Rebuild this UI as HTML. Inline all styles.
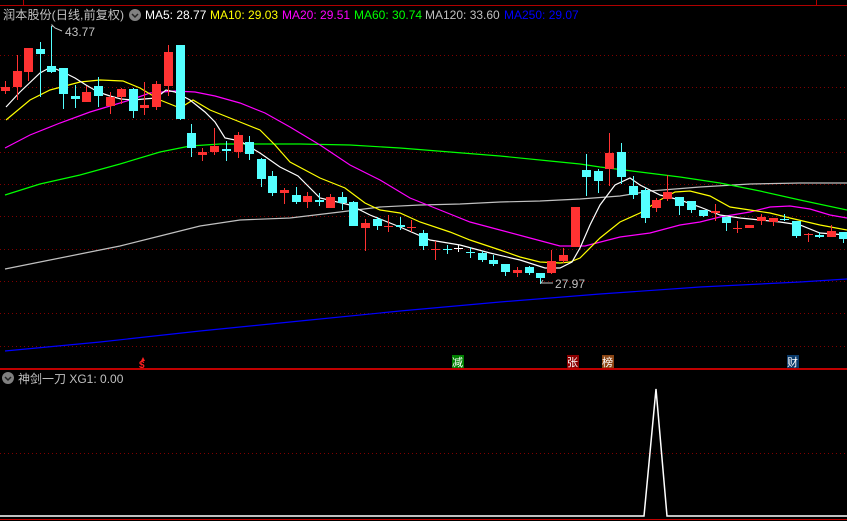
<!DOCTYPE html>
<html><head><meta charset="utf-8"><style>
html,body{margin:0;padding:0;background:#000;width:847px;height:521px;overflow:hidden}
svg{display:block}
text{font-family:"Liberation Sans","Noto Sans CJK SC",sans-serif}
</style></head><body>
<svg width="847" height="521" viewBox="0 0 847 521" xmlns="http://www.w3.org/2000/svg">
<rect width="847" height="521" fill="#000"/>
<line x1="0" y1="5.5" x2="847" y2="5.5" stroke="#b00000" stroke-width="1"/>
<line x1="23.5" y1="0" x2="23.5" y2="5" stroke="#b00000"/>
<line x1="816.5" y1="0" x2="816.5" y2="5" stroke="#b00000"/>
<g stroke="#800000" stroke-width="1" stroke-dasharray="1,3">
<line x1="0" y1="55.5" x2="847" y2="55.5"/>
<line x1="0" y1="87.5" x2="847" y2="87.5"/>
<line x1="0" y1="119.5" x2="847" y2="119.5"/>
<line x1="0" y1="152.5" x2="847" y2="152.5"/>
<line x1="0" y1="184.5" x2="847" y2="184.5"/>
<line x1="0" y1="216.5" x2="847" y2="216.5"/>
<line x1="0" y1="249.5" x2="847" y2="249.5"/>
<line x1="0" y1="281.5" x2="847" y2="281.5"/>
<line x1="0" y1="313.5" x2="847" y2="313.5"/>
<line x1="0" y1="346.5" x2="847" y2="346.5"/>
<line x1="0" y1="453.5" x2="847" y2="453.5"/>
</g>
<g fill="none" stroke-width="1.2">
<polyline stroke="#0000ff" points="5,351 100,342 200,331 300,321 400,311 500,302 600,294 700,287 800,282 847,279"/>
<polyline stroke="#c0c0c0" points="5,269 40,262 80,254 120,246 160,236 200,226 240,220 290,218 340,212 380,207 420,205 460,204 500,202 540,201 580,199 620,196 650,191 700,187 750,184 800,183 847,183"/>
<polyline stroke="#00ff00" points="5,195 40,184 80,175 120,164 160,152 190,146 220,144 260,144 300,144 350,145 400,148 450,152 500,156 550,161 580,164 600,167 640,172 680,177 720,183 760,191 800,200 847,210"/>
<polyline stroke="#ff00ff" points="5,148 30,135 60,123 90,112 110,106 130,100 150,93 175,91 195,92 215,96 240,103 265,113 290,127 320,145 350,165 380,180 410,198 440,210 470,222 500,230 530,238 560,246 585,246 620,237 650,233 680,225 700,222 720,217 750,212 770,207 790,206 810,209 830,215 847,218"/>
<polyline stroke="#ffff00" points="6,120 30,100 50,90 80,82 100,80 123,81 140,88 160,100 180,108 193,100 210,110 240,122 260,130 275,145 290,162 320,178 345,188 365,203 380,210 400,213 420,222 450,232 470,240 500,250 520,257 540,262 560,263 570,262 580,258 600,238 620,222 640,213 660,200 675,192 690,191 710,196 730,207 750,210 770,213 790,218 820,225 847,230"/>
<polyline stroke="#ffffff" points="6,107 20,92 40,73 51,67 63,72 75,78 86,85 98,92 110,96 121,99 133,100 144,99 156,98 166,90 175,92 190,100 205,112 215,122 225,138 240,141 260,153 280,167 298,176 320,198 350,205 370,215 400,227 430,240 460,245 490,253 520,260 545,268 560,268 572,262 580,248 590,225 600,205 615,185 630,178 640,185 660,195 680,200 700,207 720,215 740,218 760,220 780,222 800,225 820,233 847,235"/>
</g>
<g stroke-width="1" shape-rendering="crispEdges">
<line x1="5.5" y1="81" x2="5.5" y2="94" stroke="#ff3232"/><rect x="1" y="87" width="9" height="4" fill="#ff3232"/>
<line x1="17.5" y1="55" x2="17.5" y2="100" stroke="#ff3232"/><rect x="13" y="71" width="9" height="16" fill="#ff3232"/>
<line x1="28.5" y1="48" x2="28.5" y2="81" stroke="#ff3232"/><rect x="24" y="48" width="9" height="24" fill="#ff3232"/>
<line x1="40.5" y1="42" x2="40.5" y2="97" stroke="#54ffff"/><rect x="36" y="49" width="9" height="5" fill="#54ffff"/>
<line x1="51.5" y1="26" x2="51.5" y2="73" stroke="#54ffff"/><rect x="47" y="66" width="9" height="6" fill="#54ffff"/>
<line x1="63.5" y1="68" x2="63.5" y2="109" stroke="#54ffff"/><rect x="59" y="68" width="9" height="26" fill="#54ffff"/>
<line x1="75.5" y1="85" x2="75.5" y2="108" stroke="#54ffff"/><rect x="71" y="96" width="9" height="3" fill="#54ffff"/>
<line x1="86.5" y1="86" x2="86.5" y2="102" stroke="#ff3232"/><rect x="82" y="92" width="9" height="10" fill="#ff3232"/>
<line x1="98.5" y1="77" x2="98.5" y2="107" stroke="#54ffff"/><rect x="94" y="86" width="9" height="10" fill="#54ffff"/>
<line x1="110.5" y1="92" x2="110.5" y2="114" stroke="#ff3232"/><rect x="106" y="97" width="9" height="9" fill="#ff3232"/>
<line x1="121.5" y1="88" x2="121.5" y2="104" stroke="#ff3232"/><rect x="117" y="89" width="9" height="8" fill="#ff3232"/>
<line x1="133.5" y1="88" x2="133.5" y2="118" stroke="#54ffff"/><rect x="129" y="89" width="9" height="22" fill="#54ffff"/>
<line x1="144.5" y1="82" x2="144.5" y2="115" stroke="#ff3232"/><rect x="140" y="105" width="9" height="3" fill="#ff3232"/>
<line x1="156.5" y1="81" x2="156.5" y2="110" stroke="#ff3232"/><rect x="152" y="84" width="9" height="23" fill="#ff3232"/>
<line x1="168.5" y1="45" x2="168.5" y2="96" stroke="#ff3232"/><rect x="164" y="52" width="9" height="34" fill="#ff3232"/>
<line x1="180.5" y1="45" x2="180.5" y2="120" stroke="#54ffff"/><rect x="176" y="45" width="9" height="74" fill="#54ffff"/>
<line x1="191.5" y1="124" x2="191.5" y2="157" stroke="#54ffff"/><rect x="187" y="133" width="9" height="15" fill="#54ffff"/>
<line x1="202.5" y1="148" x2="202.5" y2="161" stroke="#ff3232"/><rect x="198" y="152" width="9" height="3" fill="#ff3232"/>
<line x1="214.5" y1="128" x2="214.5" y2="155" stroke="#ff3232"/><rect x="210" y="146" width="9" height="6" fill="#ff3232"/>
<line x1="226.5" y1="141" x2="226.5" y2="161" stroke="#54ffff"/><rect x="222" y="149" width="9" height="2" fill="#54ffff"/>
<line x1="238.5" y1="132" x2="238.5" y2="158" stroke="#ff3232"/><rect x="234" y="135" width="9" height="17" fill="#ff3232"/>
<line x1="249.5" y1="136" x2="249.5" y2="160" stroke="#54ffff"/><rect x="245" y="142" width="9" height="12" fill="#54ffff"/>
<line x1="261.5" y1="158" x2="261.5" y2="187" stroke="#54ffff"/><rect x="257" y="159" width="9" height="20" fill="#54ffff"/>
<line x1="272.5" y1="171" x2="272.5" y2="196" stroke="#54ffff"/><rect x="268" y="176" width="9" height="17" fill="#54ffff"/>
<line x1="284.5" y1="188" x2="284.5" y2="204" stroke="#ff3232"/><rect x="280" y="190" width="9" height="3" fill="#ff3232"/>
<line x1="296.5" y1="187" x2="296.5" y2="204" stroke="#54ffff"/><rect x="292" y="195" width="9" height="7" fill="#54ffff"/>
<line x1="307.5" y1="192" x2="307.5" y2="208" stroke="#ff3232"/><rect x="303" y="196" width="9" height="6" fill="#ff3232"/>
<line x1="319.5" y1="193" x2="319.5" y2="206" stroke="#54ffff"/><rect x="315" y="200" width="9" height="2" fill="#54ffff"/>
<line x1="330.5" y1="194" x2="330.5" y2="208" stroke="#ff3232"/><rect x="326" y="197" width="9" height="11" fill="#ff3232"/>
<line x1="342.5" y1="192" x2="342.5" y2="210" stroke="#54ffff"/><rect x="338" y="197" width="9" height="6" fill="#54ffff"/>
<line x1="353.5" y1="201" x2="353.5" y2="226" stroke="#54ffff"/><rect x="349" y="202" width="9" height="24" fill="#54ffff"/>
<line x1="365.5" y1="219" x2="365.5" y2="251" stroke="#ff3232"/><rect x="361" y="223" width="9" height="5" fill="#ff3232"/>
<line x1="377.5" y1="217" x2="377.5" y2="230" stroke="#54ffff"/><rect x="373" y="219" width="9" height="7" fill="#54ffff"/>
<line x1="388.5" y1="215" x2="388.5" y2="232" stroke="#ff3232"/><rect x="384" y="226" width="9" height="1" fill="#ff3232"/>
<line x1="400.5" y1="217" x2="400.5" y2="230" stroke="#54ffff"/><rect x="396" y="225" width="9" height="2" fill="#54ffff"/>
<line x1="411.5" y1="220" x2="411.5" y2="232" stroke="#ff3232"/><rect x="407" y="227" width="9" height="1" fill="#ff3232"/>
<line x1="423.5" y1="230" x2="423.5" y2="250" stroke="#54ffff"/><rect x="419" y="233" width="9" height="13" fill="#54ffff"/>
<line x1="435.5" y1="241" x2="435.5" y2="260" stroke="#ff3232"/><rect x="431" y="249" width="9" height="1" fill="#ff3232"/>
<line x1="447.5" y1="245" x2="447.5" y2="254" stroke="#54ffff"/><rect x="443" y="249" width="9" height="1" fill="#54ffff"/>
<line x1="458.5" y1="245" x2="458.5" y2="252" stroke="#fff"/><rect x="454" y="248" width="9" height="1" fill="#fff"/>
<line x1="470.5" y1="247" x2="470.5" y2="258" stroke="#54ffff"/><rect x="466" y="252" width="9" height="1" fill="#54ffff"/>
<line x1="482.5" y1="251" x2="482.5" y2="262" stroke="#54ffff"/><rect x="478" y="253" width="9" height="7" fill="#54ffff"/>
<line x1="493.5" y1="255" x2="493.5" y2="266" stroke="#54ffff"/><rect x="489" y="260" width="9" height="4" fill="#54ffff"/>
<line x1="505.5" y1="264" x2="505.5" y2="276" stroke="#54ffff"/><rect x="501" y="264" width="9" height="8" fill="#54ffff"/>
<line x1="517.5" y1="267" x2="517.5" y2="277" stroke="#ff3232"/><rect x="513" y="270" width="9" height="3" fill="#ff3232"/>
<line x1="529.5" y1="266" x2="529.5" y2="275" stroke="#54ffff"/><rect x="525" y="267" width="9" height="6" fill="#54ffff"/>
<line x1="540.5" y1="273" x2="540.5" y2="284" stroke="#54ffff"/><rect x="536" y="273" width="9" height="5" fill="#54ffff"/>
<line x1="551.5" y1="250" x2="551.5" y2="274" stroke="#ff3232"/><rect x="547" y="261" width="9" height="12" fill="#ff3232"/>
<line x1="563.5" y1="248" x2="563.5" y2="263" stroke="#ff3232"/><rect x="559" y="255" width="9" height="6" fill="#ff3232"/>
<line x1="575.5" y1="207" x2="575.5" y2="247" stroke="#ff3232"/><rect x="571" y="207" width="9" height="40" fill="#ff3232"/>
<line x1="586.5" y1="154" x2="586.5" y2="196" stroke="#54ffff"/><rect x="582" y="170" width="9" height="7" fill="#54ffff"/>
<line x1="598.5" y1="169" x2="598.5" y2="193" stroke="#54ffff"/><rect x="594" y="171" width="9" height="10" fill="#54ffff"/>
<line x1="609.5" y1="133" x2="609.5" y2="186" stroke="#ff3232"/><rect x="605" y="153" width="9" height="16" fill="#ff3232"/>
<line x1="621.5" y1="143" x2="621.5" y2="184" stroke="#54ffff"/><rect x="617" y="152" width="9" height="25" fill="#54ffff"/>
<line x1="633.5" y1="176" x2="633.5" y2="199" stroke="#54ffff"/><rect x="629" y="186" width="9" height="9" fill="#54ffff"/>
<line x1="645.5" y1="188" x2="645.5" y2="223" stroke="#54ffff"/><rect x="641" y="190" width="9" height="28" fill="#54ffff"/>
<line x1="656.5" y1="198" x2="656.5" y2="212" stroke="#ff3232"/><rect x="652" y="200" width="9" height="8" fill="#ff3232"/>
<line x1="667.5" y1="175" x2="667.5" y2="201" stroke="#ff3232"/><rect x="663" y="192" width="9" height="7" fill="#ff3232"/>
<line x1="679.5" y1="197" x2="679.5" y2="215" stroke="#54ffff"/><rect x="675" y="197" width="9" height="9" fill="#54ffff"/>
<line x1="691.5" y1="201" x2="691.5" y2="213" stroke="#54ffff"/><rect x="687" y="201" width="9" height="9" fill="#54ffff"/>
<line x1="703.5" y1="210" x2="703.5" y2="217" stroke="#54ffff"/><rect x="699" y="210" width="9" height="6" fill="#54ffff"/>
<line x1="715.5" y1="204" x2="715.5" y2="221" stroke="#ff3232"/><rect x="711" y="211" width="9" height="2" fill="#ff3232"/>
<line x1="726.5" y1="217" x2="726.5" y2="231" stroke="#54ffff"/><rect x="722" y="217" width="9" height="6" fill="#54ffff"/>
<line x1="737.5" y1="221" x2="737.5" y2="233" stroke="#ff3232"/><rect x="733" y="228" width="9" height="1" fill="#ff3232"/>
<line x1="749.5" y1="225" x2="749.5" y2="228" stroke="#ff3232"/><rect x="745" y="225" width="9" height="3" fill="#ff3232"/>
<line x1="761.5" y1="214" x2="761.5" y2="225" stroke="#ff3232"/><rect x="757" y="217" width="9" height="4" fill="#ff3232"/>
<line x1="773.5" y1="218" x2="773.5" y2="226" stroke="#ff3232"/><rect x="769" y="218" width="9" height="4" fill="#ff3232"/>
<line x1="784.5" y1="214" x2="784.5" y2="221" stroke="#54ffff"/><rect x="780" y="219" width="9" height="1" fill="#54ffff"/>
<line x1="796.5" y1="221" x2="796.5" y2="238" stroke="#54ffff"/><rect x="792" y="221" width="9" height="15" fill="#54ffff"/>
<line x1="808.5" y1="233" x2="808.5" y2="242" stroke="#ff3232"/><rect x="804" y="234" width="9" height="1" fill="#ff3232"/>
<line x1="819.5" y1="232" x2="819.5" y2="238" stroke="#54ffff"/><rect x="815" y="235" width="9" height="2" fill="#54ffff"/>
<line x1="831.5" y1="225" x2="831.5" y2="237" stroke="#ff3232"/><rect x="827" y="231" width="9" height="6" fill="#ff3232"/>
<line x1="843.5" y1="232" x2="843.5" y2="243" stroke="#54ffff"/><rect x="839" y="232" width="9" height="7" fill="#54ffff"/>
</g>
<polyline points="52,27 52,25 55,28 62,31" fill="none" stroke="#c0c0c0"/>
<text x="65" y="36" font-size="12" fill="#c0c0c0">43.77</text>
<polyline points="545,283 541,283 543,280" fill="none" stroke="#c0c0c0"/>
<line x1="541" y1="283" x2="553" y2="283" stroke="#c0c0c0"/>
<text x="555" y="288" font-size="12" fill="#c0c0c0">27.97</text>
<text x="3" y="19" font-size="12" fill="#c0c0c0" textLength="121" lengthAdjust="spacingAndGlyphs">润本股份(日线,前复权)</text>
<circle cx="135" cy="15" r="6" fill="#808080"/>
<polyline points="132,14 135,17 138,14" fill="none" stroke="#222" stroke-width="1.5"/>
<g font-size="12">
<text x="145" y="19" fill="#ffffff">MA5: 28.77</text>
<text x="210" y="19" fill="#ffff00">MA10: 29.03</text>
<text x="282" y="19" fill="#ff00ff">MA20: 29.51</text>
<text x="354" y="19" fill="#00ff00">MA60: 30.74</text>
<text x="425" y="19" fill="#c0c0c0">MA120: 33.60</text>
<text x="504" y="19" fill="#0000ff">MA250: 29.07</text>
</g>
<polygon points="143,357 141,361 145,361" fill="#ff2020"/>
<text x="139" y="368" font-size="10" fill="#ff2020" font-weight="bold">$</text>
<rect x="452" y="355" width="12" height="13" fill="#008000"/>
<text x="452" y="366" font-size="11" fill="#fff">减</text>
<rect x="567" y="355" width="12" height="13" fill="#8b0000"/>
<text x="567" y="366" font-size="11" fill="#fff">张</text>
<rect x="602" y="355" width="12" height="13" fill="#8b4513"/>
<text x="602" y="366" font-size="11" fill="#fff">榜</text>
<rect x="787" y="355" width="12" height="13" fill="#0a3a6a"/>
<text x="787" y="366" font-size="11" fill="#fff">财</text>
<line x1="0" y1="369" x2="847" y2="369" stroke="#c00000" stroke-width="2"/>
<circle cx="8" cy="378" r="6" fill="#808080"/>
<polyline points="5,377 8,380 11,377" fill="none" stroke="#222" stroke-width="1.5"/>
<text x="18" y="383" font-size="12" fill="#c0c0c0">神剑一刀 XG1: 0.00</text>
<polyline points="0,516 644,516 656,389 667,516 847,516" fill="none" stroke="#fff" stroke-width="1.5"/>
<line x1="0" y1="519.5" x2="847" y2="519.5" stroke="#c00000" stroke-width="1"/>
</svg>
</body></html>
